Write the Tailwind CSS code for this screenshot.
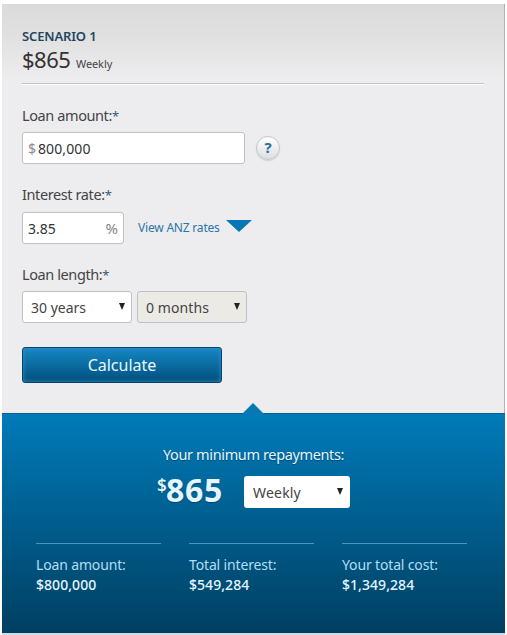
<!DOCTYPE html>
<html lang="en">
<head>
<meta charset="utf-8">
<title>Repayments calculator</title>
<script src="https://cdn.jsdelivr.net/npm/@tailwindcss/browser@4"></script>
</head>
<body class="bg-white w-[507px] h-[635px] overflow-hidden font-['Noto_Sans','Open_Sans',sans-serif] text-[#444] whitespace-nowrap">
<main class="ml-[2px] pt-1 w-[503px]">
  <section class="h-[409px] pl-5 pr-[20px] pt-[23px] border-r border-[#b0b0b2] bg-[linear-gradient(#dadada_0,#e0e0e0_30px,#ededef_76px)]">
    <h2 class="h-[18px] leading-[18px] text-[13px] font-semibold text-[#1f4560] tracking-[-0.15px]">SCENARIO 1</h2>
    <div class="h-7 flex items-baseline leading-7 text-[#333]">
      <span class="text-[22px] tracking-[-0.5px] w-[54px]">$865</span>
      <span class="text-[11px] text-[#444] tracking-[-0.1px]">Weekly</span>
    </div>
    <div class="mt-[10px] h-[2px] bg-white border-t border-[#c2c3c6]"></div>

    <label class="block mt-5 h-5 leading-5 text-[14.5px] tracking-[-0.4px]">Loan amount:<span class="text-[13px] text-[#345a78]">*</span></label>
    <div class="mt-[7px] flex items-center">
      <div class="w-[223px] h-8 rounded-[3px] border border-[#bfc0c3] bg-white flex items-center pl-[5px] text-[14px] text-[#333]"><span class="w-[10px] text-[#8b8b8b]">$</span><span class="tracking-[0.1px]">800,000</span></div>
      <div class="ml-[11px] size-6 rounded-full border border-[#c3c6c9] bg-linear-to-b from-white to-[#dcdee0] shadow-[0_1px_1px_#cfd0d2] flex items-center justify-center text-[15px] leading-none pb-px font-bold text-[#286f9a]">?</div>
    </div>

    <label class="block mt-5 h-5 leading-5 text-[14.5px] tracking-[-0.4px]">Interest rate:<span class="text-[13px] text-[#345a78]">*</span></label>
    <div class="mt-2 flex items-center">
      <div class="w-[102px] h-8 rounded-[3px] border border-[#bfc0c3] bg-white flex items-center justify-between pl-[5px] pr-[5px] text-[14px] text-[#333]"><span>3.85</span><span class="text-[15px] text-[#858585]">%</span></div>
      <a class="ml-[14px] w-[88px] text-[12px] text-[#2b76a6] tracking-[-0.2px]">View ANZ rates</a>
      <svg class="-mt-[4px]" width="26" height="12" viewBox="0 0 26 12"><path d="M0 0H26L13 12Z" fill="#0875b5"/></svg>
    </div>

    <label class="block mt-5 h-5 leading-5 text-[14.5px] tracking-[-0.4px]">Loan length:<span class="text-[13px] text-[#345a78]">*</span></label>
    <div class="mt-[7px] flex gap-[5px] text-[14px]">
      <div class="w-[110px] h-8 rounded-[3px] border border-[#bfc0c3] bg-white flex items-center justify-between pl-2 pr-[6px]"><span>30 years</span><svg class="-mt-px" width="6" height="7" viewBox="0 0 6 7"><path d="M0 0H6L3 7Z" fill="#222"/></svg></div>
      <div class="w-[110px] h-8 rounded-[3px] border border-[#bfc0c3] bg-[#ebeae5] flex items-center justify-between pl-2 pr-[6px]"><span class="tracking-[0.1px]">0 months</span><svg class="-mt-px" width="6" height="7" viewBox="0 0 6 7"><path d="M0 0H6L3 7Z" fill="#222"/></svg></div>
    </div>

    <button class="block mt-6 w-[200px] h-9 rounded-[3px] border border-[#054470] bg-linear-to-b from-[#1587c4] to-[#03507e] shadow-[inset_0_0_4px_#3790bd] text-[16px] leading-none text-[#e9f8ff]">Calculate</button>
  </section>

  <section class="relative h-[216px] border-t border-[#0a5f90] bg-[linear-gradient(#007bb9,#003f61)] text-[#e4f6ff] min-h-[220px]">
    <svg class="absolute left-[240px] -top-[11px]" width="22" height="12" viewBox="0 0 22 12"><path d="M0 11L11 0L22 11V12H0Z" fill="#0878b5"/></svg>
    <div class="pt-[30px] pl-[161px] leading-5 text-[14.5px] tracking-[-0.37px] [text-shadow:0_1px_1px_#00476d]">Your minimum repayments:</div>
    <div class="mt-3 h-8 flex items-center pl-[155px]">
      <div class="w-[87px] pb-[6px] flex items-start font-bold leading-8 [text-shadow:0_1px_1px_#00476d]"><span class="text-[17px] leading-[17px] font-semibold w-[9px]">$</span><span class="text-[32px] leading-[25px] tracking-[0.7px]">865</span></div>
      <div class="w-[106px] h-8 rounded-[3px] bg-white flex items-center justify-between pl-[9px] pr-[7px] text-[14px] text-[#444]"><span class="tracking-[0.2px]">Weekly</span><svg class="-mt-px" width="6" height="7" viewBox="0 0 6 7"><path d="M0 0H6L3 7Z" fill="#222"/></svg></div>
    </div>
    <div class="mt-[35px] ml-[34px] flex gap-7 text-[14px] leading-5">
      <div class="w-[125px] border-t border-[#4397c5] pt-[11px]"><div class="text-[#b3def5] tracking-[-0.15px]">Loan amount:</div><div class="font-medium tracking-[0.05px]">$800,000</div></div>
      <div class="w-[125px] border-t border-[#4397c5] pt-[11px]"><div class="text-[#b3def5] tracking-[-0.15px]">Total interest:</div><div class="font-medium tracking-[0.05px]">$549,284</div></div>
      <div class="w-[125px] border-t border-[#4397c5] pt-[11px]"><div class="text-[#b3def5] tracking-[-0.15px]">Your total cost:</div><div class="font-medium tracking-[0.05px]">$1,349,284</div></div>
    </div>
  </section>
  <div class="h-[2px] bg-[#c9dde6]"></div>
</main>
</body>
</html>
